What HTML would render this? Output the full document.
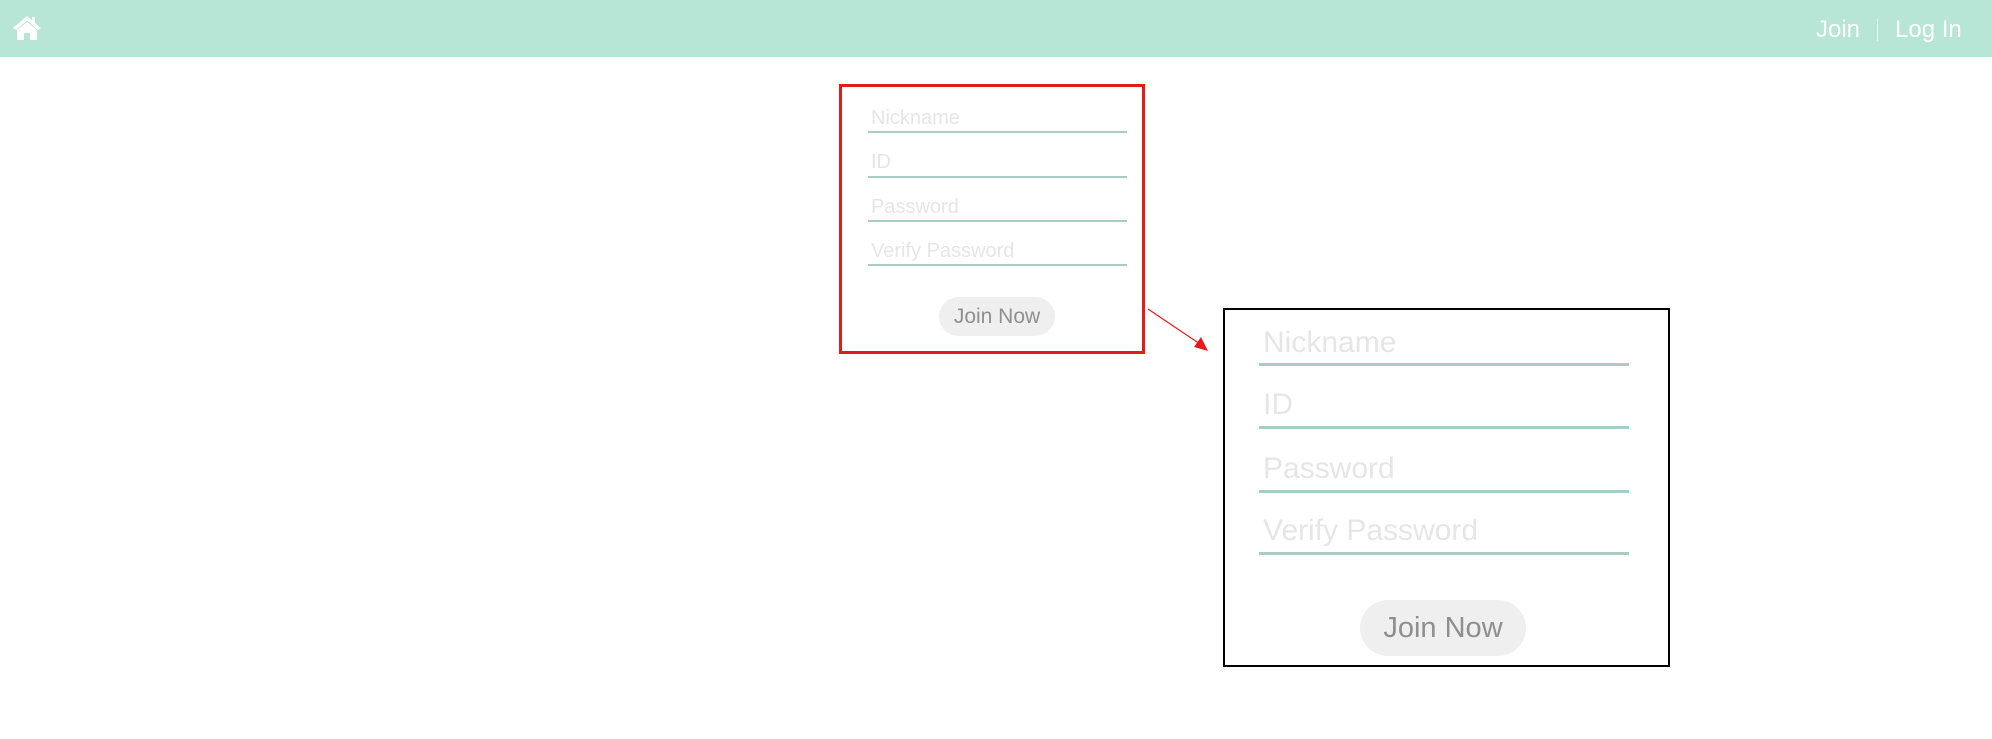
<!DOCTYPE html>
<html><head><meta charset="utf-8"><style>
body{margin:0;width:1992px;height:739px;background:#fff;position:relative;overflow:hidden;font-family:"Liberation Sans",sans-serif}
.hdr{position:absolute;left:0;top:0;width:1992px;height:57px;background:#b7e6d7}
.nav{position:absolute;top:16px;color:#fff;font-size:24px;font-family:"Liberation Sans",sans-serif}
.abs{position:absolute}
.ph{position:absolute;color:#e6e6e6}
.ln{position:absolute;background:#a9cdc5}
.btn{position:absolute;background:#efefef;border-radius:22px;color:#8f8f8f;text-align:center}
</style></head><body>
<div class="hdr"></div>
<svg class="abs" style="left:12px;top:15px" width="30" height="26" viewBox="0 0 30 26"><path d="M15 1 L1 13 L4 15 L15 5.5 L26 15 L29 13 L23 8 V2 H20 V5.5 Z" fill="#fff"/><path d="M5 15 L15 7 L25 15 V25 H18 V18 H12 V25 H5 Z" fill="#fff"/></svg>
<div class="nav" style="left:1816px">Join</div>
<div class="abs" style="left:1877px;top:19px;width:1px;height:22px;background:#e8f7f2"></div>
<div class="nav" style="left:1895px">Log In</div>

<div class="abs" style="left:839px;top:84px;width:300px;height:264px;border:3px solid #e31b1b"></div>
<div class="ph" style="left:871px;top:107px;font-size:20px">Nickname</div>
<div class="ln" style="left:868px;top:131px;width:259px;height:2px"></div>
<div class="ph" style="left:871px;top:151px;font-size:20px">ID</div>
<div class="ln" style="left:868px;top:176px;width:259px;height:2px"></div>
<div class="ph" style="left:871px;top:196px;font-size:20px">Password</div>
<div class="ln" style="left:868px;top:220px;width:259px;height:2px"></div>
<div class="ph" style="left:871px;top:240px;font-size:20px">Verify Password</div>
<div class="ln" style="left:868px;top:264px;width:259px;height:2px"></div>
<div class="btn" style="left:939px;top:297px;width:116px;height:39px;line-height:39px;font-size:21px">Join Now</div>

<svg class="abs" style="left:0;top:0" width="1992" height="739"><line x1="1148" y1="309" x2="1200" y2="344" stroke="#e31b1b" stroke-width="1.2"/><polygon points="1208,351 1194,347 1201,337" fill="#e31b1b"/></svg>

<div class="abs" style="left:1223px;top:308px;width:443px;height:355px;border:2px solid #000"></div>
<div class="ph" style="left:1263px;top:326px;font-size:30px">Nickname</div>
<div class="ln" style="left:1259px;top:363px;width:370px;height:3px"></div>
<div class="ph" style="left:1263px;top:388px;font-size:30px">ID</div>
<div class="ln" style="left:1259px;top:426px;width:370px;height:3px"></div>
<div class="ph" style="left:1263px;top:452px;font-size:30px">Password</div>
<div class="ln" style="left:1259px;top:490px;width:370px;height:3px"></div>
<div class="ph" style="left:1263px;top:514px;font-size:30px">Verify Password</div>
<div class="ln" style="left:1259px;top:552px;width:370px;height:3px"></div>
<div class="btn" style="left:1360px;top:600px;width:166px;height:56px;line-height:56px;font-size:29px;border-radius:28px">Join Now</div>
</body></html>
